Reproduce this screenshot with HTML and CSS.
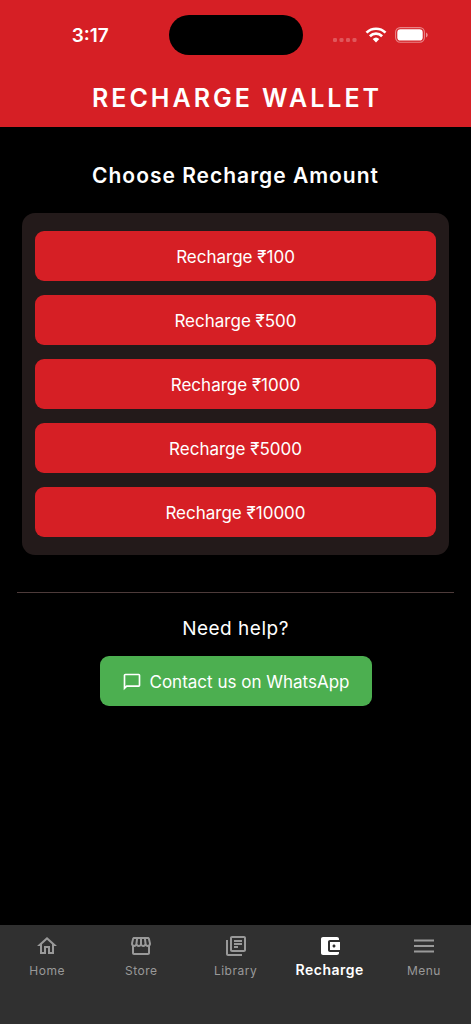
FILE: index.html
```html
<!DOCTYPE html>
<html lang="en">
<head>
<meta charset="utf-8">
<meta name="viewport" content="width=device-width, initial-scale=1">
<title>Recharge Wallet</title>
<link rel="stylesheet" href="styles.css">
</head>
<body>
<div class="app">
  <header class="header">
    <div class="status">
      <span class="status-side time">3:17</span>
      <span class="island"></span>
      <span class="status-side status-icons">
        <svg width="24" height="20" viewBox="0 0 24 20"><g fill="#fff" fill-opacity=".25"><rect y="13" width="4" height="4" rx="1.3"/><rect x="6.5" y="13" width="4" height="4" rx="1.3"/><rect x="13" y="13" width="4" height="4" rx="1.3"/><rect x="19.5" y="13" width="4" height="4" rx="1.3"/></g></svg>
        <svg width="22" height="16" viewBox="0 0 22 16"><g fill="none" stroke="#fff" stroke-width="2.700"><path d="M1.500 5.600a13.600 13.600 0 0 1 19 0"/><path d="M4.900 9.200a8.700 8.700 0 0 1 12.200 0"/></g><path fill="#fff" d="M7.700 12.100a4.800 4.800 0 0 1 6.600 0L11 15.400z"/></svg>
        <svg width="33" height="16" viewBox="0 0 33 16"><rect x=".6" y=".6" width="28.8" height="14.6" rx="4.6" fill="none" stroke="#fff" stroke-opacity=".45" stroke-width="1.1"/><rect x="2.3" y="2.3" width="25.4" height="11.2" rx="3.1" fill="#fff"/><path d="M31 5.400v5c1-.4 1.700-1.400 1.700-2.500S32 5.800 31 5.400z" fill="#fff" fill-opacity=".5"/></svg>
      </span>
    </div>
    <h1 class="title">RECHARGE WALLET</h1>
  </header>
  <main class="content">
    <h2 class="subtitle">Choose Recharge Amount</h2>
    <section class="card">
      <button class="btn" type="button">Recharge ₹100</button>
      <button class="btn" type="button">Recharge ₹500</button>
      <button class="btn" type="button">Recharge ₹1000</button>
      <button class="btn" type="button">Recharge ₹5000</button>
      <button class="btn" type="button">Recharge ₹10000</button>
    </section>
    <hr class="divider">
    <section class="help">
      <p class="help-text">Need help?</p>
      <button class="btn btn-chat" type="button">
        <svg width="20" height="20" viewBox="0 0 24 24" fill="currentColor"><path d="M4 4h16v12H5.170L4 17.170V4m0-2c-1.100 0-1.990.9-1.990 2L2 22l4-4h14c1.100 0 2-.9 2-2V4c0-1.100-.9-2-2-2H4z"/></svg>
        Contact us on WhatsApp
      </button>
    </section>
  </main>
  <nav class="nav">
    <a class="tab" href="#home"><svg viewBox="0 0 24 24"><path d="M12 5.690l5 4.500V18h-2v-6H9v6H7v-7.810l5-4.500M12 3L2 12h3v8h6v-6h2v6h6v-8h3L12 3z"/></svg><span>Home</span></a>
    <a class="tab" href="#store"><svg viewBox="0 0 24 24"><path d="M21.900 8.890l-1.050-4.370c-.22-.9-1-1.520-1.910-1.520H5.050c-.9 0-1.690.63-1.900 1.520L2.100 8.890c-.24 1.020-.02 2.060.62 2.880.08.11.19.19.28.29V19c0 1.100.9 2 2 2h14c1.100 0 2-.9 2-2v-6.940c.09-.09.2-.18.28-.28.64-.82.87-1.870.62-2.890zM18.910 4.990l1.050 4.370c.1.420.01.840-.25 1.170-.14.180-.44.470-.94.470-.61 0-1.140-.49-1.210-1.140L16.980 5l1.930-.01zM13 5h1.960l.54 4.520c.05.390-.07.780-.33 1.070-.22.260-.54.410-.95.410-.67 0-1.220-.59-1.220-1.310V5zM8.490 9.520L9.040 5H11v4.690c0 .72-.55 1.310-1.290 1.310-.34 0-.65-.15-.89-.41-.25-.29-.37-.68-.33-1.070zM4.040 9.360L5.050 5h1.970l-.58 4.860c-.08.650-.6 1.140-1.210 1.140-.49 0-.8-.29-.93-.47-.27-.32-.36-.75-.26-1.170zM5 19v-6.030c.08.010.15.030.23.030.87 0 1.660-.36 2.240-.95.6.6 1.400.95 2.310.95.87 0 1.650-.36 2.230-.93.59.57 1.390.93 2.290.93.84 0 1.640-.35 2.240-.95.58.59 1.370.95 2.240.95.08 0 .15-.02.23-.03V19H5z"/></svg><span>Store</span></a>
    <a class="tab" href="#library"><svg viewBox="0 0 24 24"><path d="M4 6H2v14c0 1.100.9 2 2 2h14v-2H4V6zm16-4H8c-1.100 0-2 .9-2 2v12c0 1.100.9 2 2 2h12c1.100 0 2-.9 2-2V4c0-1.100-.9-2-2-2zm0 14H8V4h12v12zM10 9h8v2h-8zm0 3h4v2h-4zm0-6h8v2h-8z"/></svg><span>Library</span></a>
    <a class="tab active" href="#recharge" aria-current="page"><svg viewBox="0 0 24 24"><path d="M21 18v1c0 1.100-.9 2-2 2H5c-1.110 0-2-.9-2-2V5c0-1.100.89-2 2-2h14c1.100 0 2 .9 2 2v1h-9c-1.110 0-2 .9-2 2v8c0 1.100.89 2 2 2h9zm-9-2h10V8H12v8zm4-2.500c-.83 0-1.500-.67-1.500-1.500s.67-1.500 1.500-1.500 1.500.67 1.500 1.500-.67 1.500-1.500 1.500z"/></svg><span>Recharge</span></a>
    <a class="tab" href="#menu"><svg viewBox="0 0 24 24"><path d="M2 18.500h20v-2H2v2zm0-5.500h20v-2H2v2zm0-7.500v2h20v-2H2z"/></svg><span>Menu</span></a>
  </nav>
</div>
</body>
</html>
```
FILE: styles.css
```css
* { box-sizing: border-box; }

body {
  margin: 0;
  background: #000;
  color: #fff;
  font-family: Inter, "Liberation Sans", sans-serif;
}

.app {
  display: flex;
  flex-direction: column;
  min-height: 100vh;
}

.header {
  background: #d61f25;
  padding-top: 15px;
}

.status {
  display: flex;
  align-items: center;
  gap: 16px;
}

.status-side {
  flex: 1;
  display: flex;
  align-items: center;
  justify-content: center;
}

.time {
  padding-left: 28px;
  font-size: 19px;
  font-weight: 600;
}

.status-icons { gap: 8px; padding-right: 28px; }

.island {
  width: 134px;
  height: 40px;
  border-radius: 20px;
  background: #000;
}

.title {
  margin: 0;
  padding: 25px 0 11px 3px;
  font-size: 25px;
  line-height: 36px;
  font-weight: 600;
  letter-spacing: 3px;
  text-align: center;
}

.content { flex: 1; padding: 32px 17px; }

.subtitle {
  margin: 0;
  font-size: 21px;
  line-height: 34px;
  font-weight: 600;
  letter-spacing: 1px;
  text-align: center;
}

.card {
  display: flex;
  flex-direction: column;
  gap: 14px;
  margin: 20px 5px 37px;
  padding: 18px 13px;
  border-radius: 13px;
  background: #231a1a;
}

.btn {
  height: 50px;
  padding: 1px 22px 0;
  border: 0;
  border-radius: 9px;
  background: #d61f25;
  color: #fff;
  font: 400 17px/24px Inter, "Liberation Sans", sans-serif;
}

.divider {
  height: 1px;
  margin: 0 0 22px;
  border: 0;
  background: #4d3b3a;
}

.help {
  display: flex;
  flex-direction: column;
  align-items: center;
  gap: 13px;
}

.help-text {
  margin: 0;
  font-size: 19px;
  line-height: 28px;
  letter-spacing: 0.5px;
}

.btn-chat {
  display: flex;
  align-items: center;
  gap: 8px;
  background: #4caf50;
}

.nav {
  display: flex;
  min-height: 99px;
  padding-top: 9px;
  background: #303030;
}

.tab {
  flex: 1 1 0;
  display: flex;
  flex-direction: column;
  align-items: center;
  color: #999;
  font-size: 12px;
  line-height: 26px;
  letter-spacing: 0.5px;
  text-decoration: none;
}

.tab svg {
  width: 24px;
  height: 24px;
  fill: currentColor;
}

.active {
  color: #fff;
  font-size: 14px;
  line-height: 24px;
  font-weight: 600;
}
```
